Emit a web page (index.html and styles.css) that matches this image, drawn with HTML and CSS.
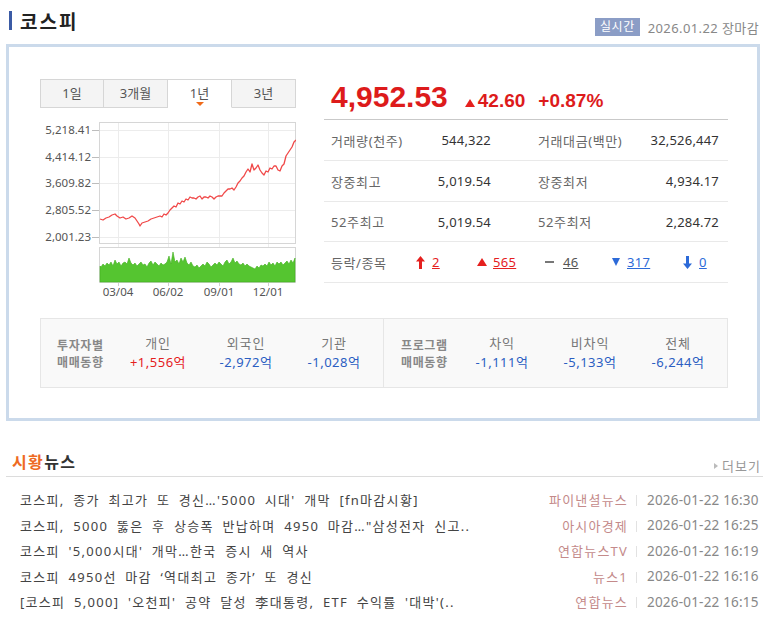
FILE: index.html
```html
<!DOCTYPE html>
<html lang="ko">
<head>
<meta charset="utf-8">
<title>코스피</title>
<link rel="stylesheet" href="styles.css">
</head>
<body>
<div class="head">
  <span class="head-bar"></span>
  <h1 class="head-title">코스피</h1>
  <div class="head-right">
    <span class="badge">실시간</span>
    <span class="head-date">2026.01.22 장마감</span>
  </div>
</div>

<div class="box">
  <div class="top">
    <div class="chart-col">
      <div class="tabs">
        <span class="tab">1일</span>
        <span class="tab">3개월</span>
        <span class="tab tab-on">1년<i class="tab-caret"></i></span>
        <span class="tab">3년</span>
      </div>
      <svg class="chart" width="256" height="190" viewBox="40 115 256 190">
        <g class="ylab">
          <text x="91" y="134">5,218.41</text>
          <text x="91" y="161">4,414.12</text>
          <text x="91" y="187">3,609.82</text>
          <text x="91" y="214">2,805.52</text>
          <text x="91" y="241">2,001.23</text>
        </g>
        <g stroke="#bdbdbd" stroke-width="1">
          <line x1="92" y1="130.5" x2="99" y2="130.5"/>
          <line x1="92" y1="157.5" x2="99" y2="157.5"/>
          <line x1="92" y1="183.5" x2="99" y2="183.5"/>
          <line x1="92" y1="210.5" x2="99" y2="210.5"/>
          <line x1="92" y1="237.5" x2="99" y2="237.5"/>
        </g>
        <g stroke="#ececec" stroke-width="1">
          <line x1="99" y1="130.5" x2="296" y2="130.5"/>
          <line x1="99" y1="157.5" x2="296" y2="157.5"/>
          <line x1="99" y1="183.5" x2="296" y2="183.5"/>
          <line x1="99" y1="210.5" x2="296" y2="210.5"/>
          <line x1="99" y1="237.5" x2="296" y2="237.5"/>
          <line x1="118.5" y1="122" x2="118.5" y2="247"/>
          <line x1="168.5" y1="122" x2="168.5" y2="247"/>
          <line x1="219.5" y1="122" x2="219.5" y2="247"/>
          <line x1="268.5" y1="122" x2="268.5" y2="247"/>
        </g>
        <rect x="99.5" y="122.5" width="196" height="121" fill="none" stroke="#d6d6d6"/>
        <polyline fill="none" stroke="#f04848" stroke-width="1.3" stroke-linejoin="round" points="100,219 103,220 106,218 109,217 112,215 115,214 117,216 120,218 123,217 126,219 129,218 132,216 135,218 137,221 139,224 140,226 142,223 145,222 148,221 151,219 154,218 157,217 160,216 162,217 164,214 166,215 168,213 170,210 172,208 174,206 176,207 178,203 180,204 182,201 184,202 186,199 188,200 190,197 192,198 194,198 196,199 198,197 200,196 202,199 204,197 206,197 208,198 210,196 212,197 214,199 216,197 218,196 220,196 222,196 224,193 226,191 228,189 230,189 232,188 234,190 236,187 238,183 240,181 242,178 244,176 246,172 248,169 250,172 252,164 254,170 256,168 258,165 260,170 262,173 264,175 266,171 268,172 270,168 272,169 274,166 276,166 278,170 280,171 282,166 284,164 286,156 288,153 290,150 292,147 294,142 296,140"/>
        <rect x="99.5" y="247.5" width="196" height="35" fill="none" stroke="#d6d6d6"/>
        <path fill="#55c530" stroke="#3fae1c" stroke-width="0.6" d="M100,282 L100,266 101,267 103,264 105,266 107,263 109,265 111,262 113,266 115,260 117,264 119,262 121,266 123,263 125,262 127,264 129,258 131,263 133,265 135,263 137,266 139,264 141,262 143,265 145,264 147,267 149,263 151,261 153,265 155,262 157,264 159,266 161,263 163,265 165,264 167,262 169,256 171,264 173,252 175,262 177,260 179,264 181,258 183,262 185,257 187,263 189,265 191,262 193,266 195,267 197,265 199,268 201,266 203,264 205,266 207,262 209,264 211,267 213,265 215,263 217,265 219,262 221,264 223,266 225,262 227,260 229,264 231,262 233,258 235,263 237,261 239,264 241,265 243,263 245,266 247,264 249,266 251,267 253,268 255,269 257,266 259,268 261,265 263,266 265,264 267,266 269,262 271,265 273,263 275,266 277,262 279,264 281,262 283,265 285,263 287,261 289,264 291,260 293,263 295,258 295,282 Z"/>
        <g stroke="#cfcfcf">
          <line x1="118.5" y1="283" x2="118.5" y2="286"/>
          <line x1="168.5" y1="283" x2="168.5" y2="286"/>
          <line x1="219.5" y1="283" x2="219.5" y2="286"/>
          <line x1="268.5" y1="283" x2="268.5" y2="286"/>
        </g>
        <g class="xlab">
          <text x="118" y="296">03/04</text>
          <text x="168" y="296">06/02</text>
          <text x="219" y="296">09/01</text>
          <text x="268" y="296">12/01</text>
        </g>
      </svg>
    </div>

    <div class="stats">
      <div class="price">
        <span class="price-now">4,952.53</span>
        <span class="price-chg"><i class="tri-up"></i>42.60</span>
        <span class="price-pct">+0.87%</span>
      </div>
      <div class="row">
        <span class="lbl">거래량(천주)</span><span class="val">544,322</span><span></span>
        <span class="lbl">거래대금(백만)</span><span class="val">32,526,447</span>
      </div>
      <div class="row">
        <span class="lbl">장중최고</span><span class="val">5,019.54</span><span></span>
        <span class="lbl">장중최저</span><span class="val">4,934.17</span>
      </div>
      <div class="row">
        <span class="lbl">52주최고</span><span class="val">5,019.54</span><span></span>
        <span class="lbl">52주최저</span><span class="val">2,284.72</span>
      </div>
      <div class="row row-updown">
        <span class="lbl">등락/종목</span>
        <span class="ud ud-red"><svg class="arr" width="9" height="13" viewBox="0 0 9 13"><path d="M4.5 0 L9 5.5 L6 5.5 L6 13 L3 13 L3 5.5 L0 5.5 Z" fill="#e5201e"/></svg><a>2</a></span>
        <span class="ud ud-red"><i class="tri-up tri-sm"></i><a>565</a></span>
        <span class="ud ud-gray"><i class="dash"></i><a>46</a></span>
        <span class="ud ud-blue"><i class="tri-down"></i><a>317</a></span>
        <span class="ud ud-blue"><svg class="arr" width="9" height="13" viewBox="0 0 9 13"><path d="M4.5 13 L9 7.5 L6 7.5 L6 0 L3 0 L3 7.5 L0 7.5 Z" fill="#2c6ad8"/></svg><a>0</a></span>
      </div>
    </div>
  </div>

  <div class="flow">
    <div class="flow-half">
      <div class="flow-lbl">투자자별<br>매매동향</div>
      <div class="flow-cell"><span class="flow-h">개인</span><span class="flow-v up">+1,556억</span></div>
      <div class="flow-cell"><span class="flow-h">외국인</span><span class="flow-v dn">-2,972억</span></div>
      <div class="flow-cell"><span class="flow-h">기관</span><span class="flow-v dn">-1,028억</span></div>
    </div>
    <div class="flow-half flow-right">
      <div class="flow-lbl">프로그램<br>매매동향</div>
      <div class="flow-cell"><span class="flow-h">차익</span><span class="flow-v dn">-1,111억</span></div>
      <div class="flow-cell"><span class="flow-h">비차익</span><span class="flow-v dn">-5,133억</span></div>
      <div class="flow-cell"><span class="flow-h">전체</span><span class="flow-v dn">-6,244억</span></div>
    </div>
  </div>
</div>

<div class="news">
  <div class="news-head">
    <h2 class="news-title"><em>시황</em>뉴스</h2>
    <a class="more"><i class="more-tri"></i>더보기</a>
  </div>
  <ul class="news-list">
    <li class="news-item"><span class="nt">코스피, 종가 최고가 또 경신…'5000 시대' 개막 [fn마감시황]</span><span class="ns">파이낸셜뉴스</span><span class="nd">2026-01-22 16:30</span></li>
    <li class="news-item"><span class="nt">코스피, 5000 뚫은 후 상승폭 반납하며 4950 마감…"삼성전자 신고..</span><span class="ns">아시아경제</span><span class="nd">2026-01-22 16:25</span></li>
    <li class="news-item"><span class="nt">코스피 '5,000시대' 개막…한국 증시 새 역사</span><span class="ns">연합뉴스TV</span><span class="nd">2026-01-22 16:19</span></li>
    <li class="news-item"><span class="nt">코스피 4950선 마감 ‘역대최고 종가’ 또 경신</span><span class="ns">뉴스1</span><span class="nd">2026-01-22 16:16</span></li>
    <li class="news-item"><span class="nt">[코스피 5,000] '오천피' 공약 달성 李대통령, ETF 수익률 '대박'(..</span><span class="ns">연합뉴스</span><span class="nd">2026-01-22 16:15</span></li>
  </ul>
</div>
</body>
</html>
```

FILE: styles.css
```css
* { box-sizing: border-box; }
body {
  margin: 0;
  background: #fff;
  color: #333;
  font-family: "Noto Sans", "Noto Sans CJK KR", sans-serif;
  font-size: 13px;
}
h1, h2, ul { margin: 0; padding: 0; }
a { cursor: pointer; }
i { font-style: normal; }

/* header */
.head {
  display: flex;
  align-items: center;
  height: 40px;
  padding: 0 14px 0 9px;
}
.head-bar {
  width: 3px;
  height: 19px;
  background: #3b5ba5;
  margin-right: 8px;
}
.head-title {
  font-size: 19px;
  font-weight: bold;
  color: #222;
  font-family: "Noto Sans CJK KR", sans-serif;
  letter-spacing: 2px;
}
.head-right {
  margin-left: auto;
  display: flex;
  align-items: center;
  padding-top: 14px;
}
.badge {
  background: #8b9dc6;
  color: #fff;
  font-size: 12px;
  line-height: 18px;
  padding: 0 5px;
  letter-spacing: 0.5px;
  margin-right: 8px;
}
.head-date {
  color: #888;
  font-size: 13px;
  letter-spacing: 0.4px;
}

/* main box */
.box {
  margin: 4px 0 0 6px;
  width: 754px;
  border: 3px solid #cbdaeb;
  padding: 32px 29px 30px 31px;
}
.top {
  display: flex;
  height: 239px;
}
.chart-col {
  width: 256px;
  display: flex;
  flex-direction: column;
}
.tabs {
  display: flex;
  height: 29px;
}
.tab {
  position: relative;
  width: 64px;
  border: 1px solid #d6d6d6;
  border-left: none;
  background: #f4f4f4;
  color: #555;
  text-align: center;
  line-height: 27px;
  font-size: 13px;
}
.tab:first-child { border-left: 1px solid #d6d6d6; }
.tab-on {
  background: #fff;
  border-bottom-color: #fff;
}
.tab-caret {
  position: absolute;
  left: 28px;
  bottom: 1px;
  width: 0;
  height: 0;
  border-left: 4px solid transparent;
  border-right: 4px solid transparent;
  border-top: 4px solid #f06a1a;
}
.chart {
  display: block;
  margin-top: 7px;
}
.ylab text {
  font-family: "Noto Sans", sans-serif;
  font-size: 11.5px;
  fill: #555;
  text-anchor: end;
}
.xlab text {
  font-family: "Noto Sans", sans-serif;
  font-size: 11.5px;
  fill: #555;
  text-anchor: middle;
}

/* stats */
.stats {
  width: 404px;
  margin-left: 28px;
}
.price {
  display: flex;
  align-items: baseline;
  height: 41px;
  padding: 0 0 0 7px;
  border-bottom: 1px solid #c9c9c9;
  line-height: 36px;
  color: #dd1b1b;
  font-family: "Liberation Sans", Arial, sans-serif;
  font-weight: bold;
}
.price-now { font-size: 30px; letter-spacing: 0; }
.price-chg { font-size: 19px; margin-left: 17px; display: flex; align-items: baseline; }
.price-pct { font-size: 19px; margin-left: 13px; }
.tri-up {
  display: inline-block;
  width: 0; height: 0;
  border-left: 5px solid transparent;
  border-right: 5px solid transparent;
  border-bottom: 8px solid #e5201e;
  margin-right: 3px;
}
.tri-sm {
  margin-right: 6px;
}
.tri-down {
  display: inline-block;
  width: 0; height: 0;
  border-left: 4px solid transparent;
  border-right: 4px solid transparent;
  border-top: 8px solid #2c6ad8;
  margin-right: 7px;
}
.dash {
  display: inline-block;
  width: 9px;
  height: 2px;
  background: #777;
  margin-right: 9px;
  vertical-align: middle;
}
.row {
  display: grid;
  grid-template-columns: 100px 60px 47px 90px 91px;
  align-items: center;
  height: 41px;
  padding: 0 9px 0 7px;
  border-bottom: 1px solid #e9e9e9;
}
.row:nth-child(4) { height: 40px; }
.lbl { color: #666; white-space: nowrap; letter-spacing: 0.6px; }
.val { text-align: right; color: #333; white-space: nowrap; letter-spacing: 0.2px; }
.row-updown {
  grid-template-columns: 85px 61px 68px 67px 71px 1fr;
}
.ud { display: flex; align-items: center; }
.ud a { text-decoration: underline; letter-spacing: 0.3px; }
.arr { margin-right: 7px; }
.ud-red a { color: #e5201e; }
.ud-gray a { color: #555; }
.ud-blue a { color: #2c6ad8; }

/* investor flow */
.flow {
  display: flex;
  height: 70px;
  background: #f9f9f9;
  border: 1px solid #e6e6e6;
}
.flow-half {
  display: flex;
  align-items: center;
  width: 343px;
  padding-left: 16px;
  border-right: 1px solid #e6e6e6;
}
.flow-right {
  border-right: none;
  width: auto;
  flex: 1;
  padding-left: 17px;
}
.flow-lbl {
  width: 57px;
  font-weight: bold;
  color: #888;
  font-size: 12px;
  letter-spacing: 0.6px;
  line-height: 17.5px;
  font-family: "Noto Sans CJK KR", sans-serif;
}
.flow-cell {
  width: 88px;
  display: flex;
  flex-direction: column;
  align-items: center;
  line-height: 19px;
}
.flow-h { color: #777; letter-spacing: 0.8px; }
.flow-v { white-space: nowrap; letter-spacing: 0.5px; }
.up { color: #e5201e; }
.dn { color: #2b5ec2; }

/* news */
.news {
  margin: 25px 10px 0 6px;
}
.news-head {
  display: flex;
  align-items: center;
  justify-content: space-between;
  height: 31px;
  border-bottom: 1px solid #dcdcdc;
}
.news-title {
  font-size: 16px;
  font-weight: bold;
  color: #333;
  padding-left: 6px;
  letter-spacing: 1.4px;
  font-family: "Noto Sans CJK KR", sans-serif;
}
.news-title em { font-style: normal; color: #ee6a22; }
.more {
  display: flex;
  align-items: center;
  color: #999;
  font-size: 13px;
  letter-spacing: 1px;
  padding-top: 9px;
  padding-right: 2px;
}
.more-tri {
  width: 0; height: 0;
  border-top: 3px solid transparent;
  border-bottom: 3px solid transparent;
  border-left: 4px solid #bbb;
  margin-right: 4px;
}
.news-list {
  list-style: none;
  padding: 10px 5px 0 14px;
}
.news-item {
  display: flex;
  align-items: center;
  height: 25.5px;
  white-space: nowrap;
}
.nt {
  flex: 1;
  color: #444;
  word-spacing: 4px;
  letter-spacing: 1.3px;
  overflow: hidden;
}
.ns {
  color: #c48a8a;
  letter-spacing: 1.2px;
}
.ns::after {
  content: "";
  display: inline-block;
  width: 1px;
  height: 11px;
  background: #e2e2e2;
  margin: 0 10px 0 8px;
  vertical-align: -1px;
}
.nd {
  color: #888;
  width: 111px;
  text-align: right;
  font-size: 13.5px;
  letter-spacing: 0.2px;
}
```
